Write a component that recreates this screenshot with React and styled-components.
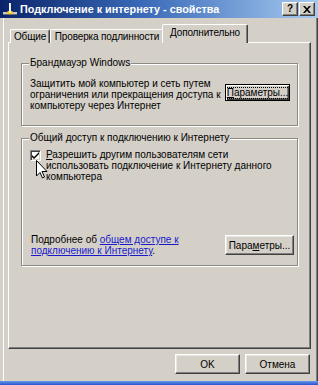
import React from 'react';
import styled, { createGlobalStyle, css } from 'styled-components';

const Global = createGlobalStyle`
  html, body { margin: 0; padding: 0; background: #d4d0c8; }
  body {
    width: 318px; height: 385px; overflow: hidden;
    font-family: "Liberation Sans", Arial, sans-serif;
    font-size: 10px; color: #000;
  }
`;

const Screen = styled.div`
  width: 318px; height: 385px;
  display: flex; flex-direction: column;
`;

const Window = styled.div`
  flex: 0 0 381px;
  display: flex; flex-direction: column;
  background: #d4d0c8;
  box-shadow: inset 3px 0 0 #d4d0c8, inset 4px 0 0 #ffffff,
    inset -1px 0 0 #404040, inset -2px 0 0 #808080;
  position: relative;
`;

const TaskStrip = styled.div`
  flex: 1;
  background: linear-gradient(#6a96e8, #2454d0);
`;

const TitleBar = styled.div`
  height: 18px;
  display: flex; align-items: center;
  padding: 0 3px 0 3px;
  background: linear-gradient(to right, #0a246a 0%, #3a6ab8 45%, #a6caf0 100%);
`;

const TitleText = styled.div`
  flex: 1;
  margin-left: 3px;
  color: #fff;
  font-weight: bold;
  font-size: 10.8px;
  white-space: nowrap;
`;

const CaptionButton = styled.div`
  width: 14px; height: 12px;
  margin-left: ${p => p.$gap}px;
  display: flex; align-items: center; justify-content: center;
  background: #d4d0c8;
  border: 1px solid; border-color: #fff #404040 #404040 #fff;
  box-shadow: inset -1px -1px 0 #808080;
  font-weight: bold; font-size: 10px; line-height: 10px;
`;

const Client = styled.div`
  flex: 1;
  display: flex; flex-direction: column;
  padding: 7px 7px 0 8px;
`;

const Tabs = styled.div`
  display: flex; align-items: flex-end;
  height: 18px;
  padding-left: 2px;
  position: relative; z-index: 1;
  margin-bottom: -1px;
`;

const Tab = styled.div`
  width: ${p => p.$w}px;
  box-sizing: border-box;
  height: ${p => (p.$active ? 19 : 14)}px;
  display: flex; align-items: center; justify-content: center;
  white-space: nowrap;
  letter-spacing: -0.15px;
  background: #d4d0c8;
  border-top: 1px solid #fff;
  border-left: 1px solid #fff;
  border-right: 1px solid #404040;
  box-shadow: inset -1px 0 0 #808080;
  border-radius: 2px 2px 0 0;
  ${p => p.$active && css`
    padding-bottom: 3px;
    margin-left: -2px;
    position: relative; z-index: 2;
  `}
`;

const Panel = styled.div`
  height: 307px;
  box-sizing: border-box;
  display: flex; flex-direction: column;
  gap: 12px;
  padding: 20px 12px 0 12px;
  border: 1px solid; border-color: #fff #404040 #404040 #fff;
  box-shadow: inset -1px -1px 0 #808080;
`;

const Group = styled.div`
  position: relative;
  height: ${p => p.$h}px;
  box-sizing: border-box;
  display: flex; flex-direction: column;
  border: 1px solid #8c8a86;
  box-shadow: 1px 1px 0 #fff, inset 1px 1px 0 #fff;
  padding: ${p => p.$pad};
`;

const Legend = styled.div`
  position: absolute;
  top: -7px; left: 7px;
  padding: 0 1px;
  line-height: 12px;
  background: #d4d0c8;
  white-space: nowrap;
`;

const Row = styled.div`
  display: flex;
  align-items: ${p => p.$align || 'flex-start'};
  justify-content: space-between;
  margin-top: ${p => (p.$bottom ? 'auto' : '0')};
`;

const Text = styled.div`
  line-height: 11px;
  margin-left: ${p => p.$ml || 0}px;
`;

const Button = styled.div`
  width: ${p => p.$w}px;
  height: ${p => p.$h}px;
  box-sizing: border-box;
  margin-top: ${p => p.$mt || 0}px;
  display: flex; align-items: center; justify-content: center;
  background: #d4d0c8;
  border: 1px solid; border-color: #fff #404040 #404040 #fff;
  box-shadow: inset -1px -1px 0 #808080, inset 1px 1px 0 #e8e6e2;
  white-space: nowrap;
  ${p => p.$default && css`
    border: 1px solid #000;
    box-shadow: inset 1px 1px 0 #fff, inset -1px -1px 0 #404040, inset -2px -2px 0 #808080;
  `}
`;

const Focus = styled.span`
  padding: 0 1px;
  outline: 1px dotted #000;
  outline-offset: 0px;
  line-height: 10px;
`;

const U = styled.span`
  text-decoration: underline;
`;

const CheckRow = styled.div`
  display: flex; align-items: flex-start;
  gap: 5px;
`;

const CheckBox = styled.div`
  flex: 0 0 auto;
  width: 11px; height: 11px;
  box-sizing: border-box;
  margin-top: 1px;
  background: #fff;
  border: 1px solid; border-color: #808080 #fff #fff #808080;
  box-shadow: inset 1px 1px 0 #404040, inset -1px -1px 0 #d4d0c8;
  display: flex; align-items: center; justify-content: center;
`;

const Link = styled.span`
  color: #1a1acc;
  text-decoration: underline;
`;

const Footer = styled.div`
  display: flex; justify-content: flex-end;
  gap: 5px;
  padding-top: 5px;
  padding-right: 1px;
`;

const Cursor = styled.svg`
  position: absolute;
  left: 36px; top: 160px;
  z-index: 5;
`;

const TitleIcon = () => (
  <svg width="14" height="14" viewBox="0 0 14 14">
    <rect x="6" y="1" width="2" height="9" fill="#e8e8e8" />
    <rect x="6" y="1" width="1" height="9" fill="#ffffff" />
    <rect x="0" y="10" width="14" height="2" fill="#c8c8c8" />
    <rect x="0" y="12" width="14" height="1" fill="#6a6a6a" />
    <ellipse cx="7" cy="10.5" rx="3" ry="1.8" fill="#f0c020" />
    <ellipse cx="7" cy="10" rx="1.5" ry="0.9" fill="#fff4a0" />
  </svg>
);

const CloseGlyph = () => (
  <svg width="8" height="7" viewBox="0 0 8 7">
    <path d="M0 0 L2 0 L4 2.3 L6 0 L8 0 L5 3.5 L8 7 L6 7 L4 4.7 L2 7 L0 7 L3 3.5 Z" fill="#000" />
  </svg>
);

const CheckMark = () => (
  <svg width="7" height="7" viewBox="0 0 7 7">
    <path d="M0 3 L2 5 L7 0 L7 2 L2 7 L0 5 Z" fill="#000" />
  </svg>
);

export default function App() {
  return (
    <>
      <Global />
      <Screen>
        <Window>
          <TitleBar>
            <TitleIcon />
            <TitleText>Подключение к интернету - свойства</TitleText>
            <CaptionButton $gap={0}>?</CaptionButton>
            <CaptionButton $gap={1}><CloseGlyph /></CaptionButton>
          </TitleBar>
          <Client>
            <Tabs>
              <Tab $w={40}>Общие</Tab>
              <Tab $w={114}>Проверка подлинности</Tab>
              <Tab $w={86} $active>Дополнительно</Tab>
            </Tabs>
            <Panel>
              <Group $h={63} $pad="14px 7px 0 8px">
                <Legend>Брандмауэр Windows</Legend>
                <Row>
                  <Text>
                    Защитить мой компьютер и сеть путем<br />
                    ограничения или прекращения доступа к<br />
                    компьютеру через Интернет
                  </Text>
                  <Button $w={65} $h={17} $mt={6} $default>
                    <Focus><U>П</U>араметры...</Focus>
                  </Button>
                </Row>
              </Group>
              <Group $h={128} $pad="10px 3px 9px 8px">
                <Legend>Общий доступ к подключению к Интернету</Legend>
                <CheckRow>
                  <CheckBox><CheckMark /></CheckBox>
                  <Text>
                    <U>Р</U>азрешить другим пользователям сети<br />
                    использовать подключение к Интернету данного<br />
                    компьютера
                  </Text>
                </CheckRow>
                <Row $bottom $align="center">
                  <Text $ml={1}>
                    Подробнее об <Link>общем доступе к</Link><br />
                    <Link>подключению к Интернету</Link>.
                  </Text>
                  <Button $w={69} $h={20}>Пара<U>м</U>етры...</Button>
                </Row>
              </Group>
            </Panel>
            <Footer>
              <Button $w={65} $h={20}>OK</Button>
              <Button $w={65} $h={20}>Отмена</Button>
            </Footer>
          </Client>
          <Cursor width="12" height="19" viewBox="0 0 12 19">
            <path d="M0.5 0.5 L0.5 16 L4 12.5 L6.5 18 L8.5 17 L6 11.5 L11 11.5 Z" fill="#fff" stroke="#000" strokeWidth="1" />
          </Cursor>
        </Window>
        <TaskStrip />
      </Screen>
    </>
  );
}
